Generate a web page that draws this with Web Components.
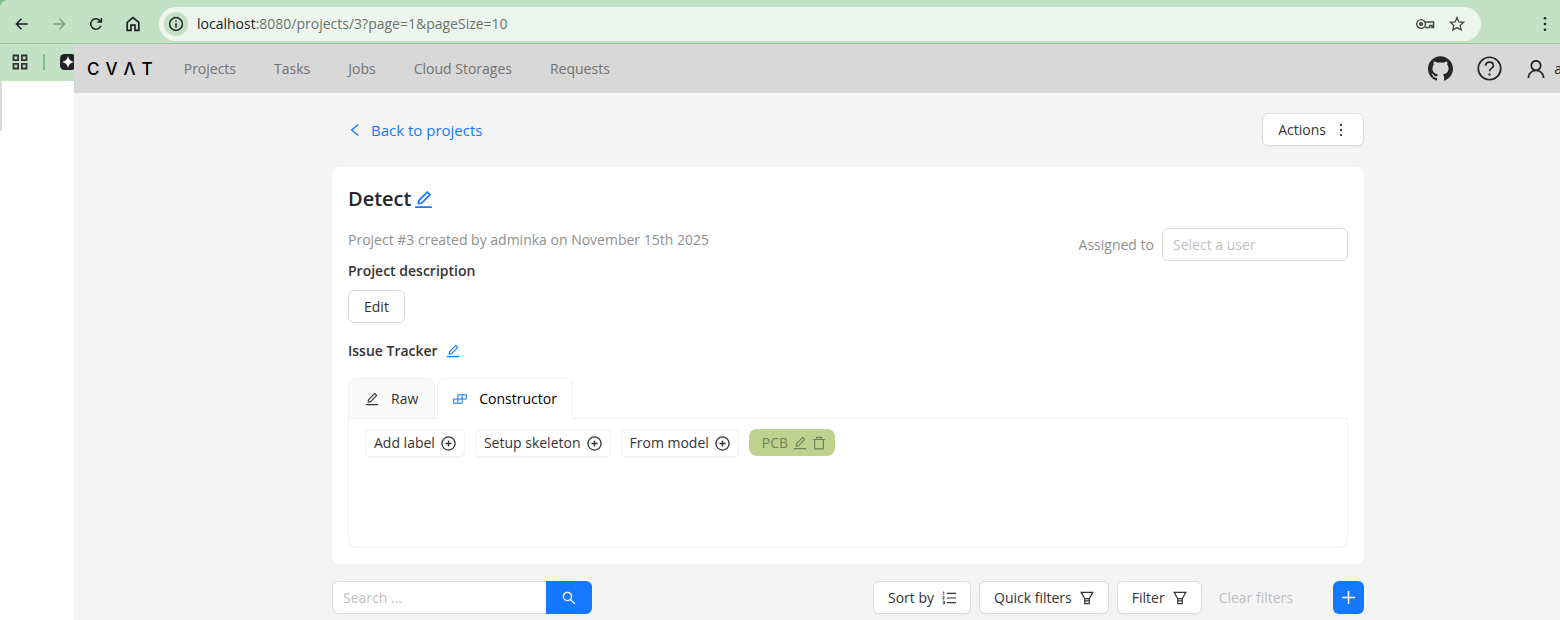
<!DOCTYPE html>
<html lang="en">
<head>
<meta charset="utf-8">
<title>Detect</title>
<style>
  html, body { height: 100%; }
  body {
    margin: 0;
    font: 14px/22px "Open Sans", "Noto Sans", sans-serif;
    color: #333;
    background: #fff;
    overflow: hidden;
  }
</style>
</head>
<body>
<browser-window url-host="localhost" url-path=":8080/projects/3?page=1&amp;pageSize=10">
  <cvat-header></cvat-header>
  <project-page></project-page>
</browser-window>

<script>
const ANT = {
  edit: 'M257.7 752c2 0 4-.2 6-.5L431.9 722c2-.4 3.9-1.3 5.3-2.8l423.9-423.9a9.96 9.96 0 000-14.1L694.9 114.9c-1.9-1.9-4.4-2.9-7.1-2.9s-5.2 1-7.1 2.9L256.8 538.8c-1.5 1.5-2.4 3.3-2.8 5.3l-29.5 168.2a33.5 33.5 0 009.4 29.8c6.6 6.4 14.9 9.9 23.8 9.9zm67.4-174.4L687.8 215l73.3 73.3-362.7 362.6-88.9 15.7 15.6-89zM880 836H144c-17.7 0-32 14.3-32 32v36c0 4.4 3.6 8 8 8h784c4.4 0 8-3.6 8-8v-36c0-17.7-14.3-32-32-32z',
  left: 'M724 218.3V141c0-6.7-7.7-10.4-12.9-6.3L260.3 486.8a31.86 31.86 0 000 50.3l450.8 352.1c5.3 4.1 12.9.4 12.9-6.3v-77.3c0-4.9-2.3-9.6-6.1-12.6l-360-281 360-281.1c3.8-3 6.1-7.7 6.1-12.6z',
  search: 'M909.6 854.5L649.9 594.8C690.2 542.7 712 479 712 412c0-80.2-31.3-155.4-87.9-212.1-56.6-56.7-132-87.9-212.1-87.9s-155.5 31.3-212.1 87.9C143.2 256.5 112 331.8 112 412c0 80.1 31.3 155.5 87.9 212.1C256.5 680.8 331.8 712 412 712c67 0 130.6-21.8 182.7-62l259.7 259.6a8.2 8.2 0 0011.6 0l43.6-43.5a8.2 8.2 0 000-11.6zM570.4 570.4C528 612.7 471.8 636 412 636s-116-23.3-158.4-65.6C211.3 528 188 471.8 188 412s23.3-116.1 65.6-158.4C296 211.3 352.2 188 412 188s116.1 23.2 158.4 65.6S636 352.2 636 412s-23.3 116.1-65.6 158.4z',
  build: 'M916 210H376c-17.7 0-32 14.3-32 32v236H108c-17.7 0-32 14.3-32 32v272c0 17.7 14.3 32 32 32h540c17.7 0 32-14.3 32-32V546h236c17.7 0 32-14.3 32-32V242c0-17.7-14.3-32-32-32zm-504 68h200v200H412V278zm-68 468H144V546h200v200zm268 0H412V546h200v200zm268-268H680V278h200v200z',
  github: 'M511.6 76.3C264.3 76.2 64 276.4 64 523.5 64 718.9 189.3 885 363.8 946c23.5 5.9 19.9-10.8 19.9-22.2v-77.5c-135.7 15.9-141.2-73.9-150.3-88.9C215 726 171.5 718 184.5 703c30.9-15.9 62.4 4 98.9 57.9 26.4 39.1 77.9 32.5 104 26 5.7-23.5 17.9-44.5 34.7-60.8-140.6-25.2-199.2-111-199.2-213 0-49.5 16.3-95 48.3-131.7-20.4-60.5 1.9-112.3 4.9-120 58.1-5.2 118.5 41.6 123.2 45.3 33-8.9 70.7-13.6 112.9-13.6 42.4 0 80.2 4.9 113.5 13.9 11.3-8.6 67.3-48.8 121.3-43.9 2.9 7.7 24.7 58.3 5.5 118 32.4 36.8 48.9 82.7 48.9 132.3 0 102.2-59 188.1-200 212.9a127.5 127.5 0 0138.1 91v112.5c.8 9 0 17.9 15 17.9 177.1-59.7 304.6-227 304.6-424.1 0-247.2-200.4-447.3-447.5-447.3z',
  user: 'M858.5 763.6a374 374 0 00-80.6-119.5 375.63 375.63 0 00-119.5-80.6c-.4-.2-.8-.3-1.2-.5C719.5 518 760 444.7 760 362c0-137-111-248-248-248S264 225 264 362c0 82.7 40.5 156 102.8 201.1-.4.2-.8.3-1.2.5-44.8 18.9-85 46-119.5 80.6a375.63 375.63 0 00-80.6 119.5A371.7 371.7 0 00136 901.8a8 8 0 008 8.2h60c4.4 0 7.9-3.5 8-7.8 2-77.2 33-149.5 87.8-204.3 56.7-56.7 132-87.9 212.2-87.9s155.5 31.2 212.2 87.9C779 752.7 810 825 812 902.2c.1 4.4 3.6 7.8 8 7.8h60a8 8 0 008-8.2c-1-47.8-10.9-94.3-29.5-138.2zM512 534c-45.9 0-89.1-17.9-121.6-50.4S340 407.9 340 362c0-45.9 17.9-89.1 50.4-121.6S466.1 190 512 190s89.1 17.9 121.6 50.4S684 316.1 684 362c0 45.9-17.9 89.1-50.4 121.6S557.9 534 512 534z'
};

// Line icons on a 16 unit grid
const LINE = {
  'plus-circle': '<circle cx="8" cy="8" r="7"/><path d="M8 4.8v6.4M4.8 8h6.4"/>',
  plus: '<path d="M8 1v14M1 8h14"/>',
  trash: '<path d="M1 4h14M5.2 4V1.6h5.6V4M3 4v10.6h10V4"/>',
  filter: '<path d="M1.4 1.6h13.2L10.6 8.8H5.4zM5.4 8.8v5.6h5.2V8.8M5.4 11.2h5.2"/>',
  list: '<path d="M5.5 2.8H16M5.5 8H16M5.5 13.2H16"/><path stroke-width="1" d="M1 1.2h1v3.2M.8 6.6h2L.8 9.2h2M.8 11.6h2v3.2h-2M1.4 13.2h1.4"/>',
  more: '<g fill="currentColor" stroke="none"><circle cx="8" cy="2.2" r="1.3"/><circle cx="8" cy="8" r="1.3"/><circle cx="8" cy="13.8" r="1.3"/></g>',
  question: '<circle cx="8" cy="8" r="7.2"/><path d="M5.5 6.3c0-1.5 1.1-2.4 2.5-2.4s2.5.9 2.5 2.3c0 1.8-2.5 1.7-2.5 3.6"/><circle cx="8" cy="11.8" r=".25"/>',
  back: '<path d="M14.5 8h-13M7.5 2L1.5 8l6 6"/>',
  forward: '<path d="M1.5 8h13M8.5 2l6 6-6 6"/>',
  reload: '<path d="M13.6 10A6 6 0 1 1 12.5 4L14 5.6M14.2 1.2v4.6H9.6"/>',
  home: '<path d="M2.2 14.4V6.3L8 1.6l5.8 4.7v8.1H10V9.2H6v5.2z"/>',
  info: '<circle cx="8" cy="8" r="6.4"/><path d="M8 7.2v4.2M8 4.4v1.4"/>',
  star: '<path d="M8 1.6l1.9 4.3 4.7.4-3.5 3.1 1 4.6L8 11.6 3.9 14l1-4.6L1.4 6.3l4.7-.4z"/>',
  key: '<circle cx="4.5" cy="8" r="3.9"/><circle cx="4.5" cy="8" r="1.2" fill="currentColor"/><path d="M8.2 6.3h7.4v4.9h-1.4V9.3h-2v1.9H8"/>',
  apps: '<path d="M1.5 1.5h4.6v4.6H1.5zM9.9 1.5h4.6v4.6H9.9zM1.5 9.9h4.6v4.6H1.5zM9.9 9.9h4.6v4.6H9.9z"/>',
  spark: '<g stroke="none"><rect width="16" height="16" rx="4.5" fill="#202124"/><path fill="#fff" d="M8 2q.8 5.2 6 6-5.2.8-6 6-.8-5.2-6-6 5.2-.8 6-6z"/></g>'
};

class AppIcon extends HTMLElement {
  constructor() {
    super();
    this.attachShadow({ mode: 'open' });
  }

  connectedCallback() {
    const name = this.getAttribute('name');
    const svg = ANT[name]
      ? `<svg viewBox="64 64 896 896" fill="currentColor"><path d="${ANT[name]}"/></svg>`
      : `<svg viewBox="0 0 16 16" fill="none" stroke="currentColor">${LINE[name]}</svg>`;
    this.shadowRoot.innerHTML = `
      <style>
        :host { display: inline-flex; flex: none; width: 1em; height: 1em; font-size: 14px; }
        svg { display: block; width: 100%; height: 100%; stroke-width: var(--stroke, 1.4); overflow: visible; }
      </style>
      ${svg}
    `;
  }
}
customElements.define('app-icon', AppIcon);

class AppButton extends HTMLElement {
  constructor() {
    super();
    this.attachShadow({ mode: 'open' });
    this.shadowRoot.innerHTML = `
      <style>
        :host { display: inline-flex; flex: none; }
        button {
          display: flex;
          align-items: center;
          gap: 8px;
          height: 33px;
          padding: 0 var(--button-padding, 15px);
          font: inherit;
          color: #333;
          background: #fff;
          border: 1px solid #dcdcdc;
          border-radius: 6px;
          box-shadow: 0 2px 0 rgba(0, 0, 0, 0.02);
          cursor: pointer;
        }
        :host([size="small"]) button {
          gap: 6px;
          height: 28px;
          padding: 0 8px;
          border-color: #f0f0f0;
          border-radius: 5px;
        }
        :host([type="text"]) button {
          padding: 0 8px;
          color: #bfbfbf;
          background: none;
          border-color: transparent;
          box-shadow: none;
        }
        :host([type="link"]) button {
          height: auto;
          padding: 0;
          color: #1677ff;
          background: none;
          border: 0;
          box-shadow: none;
        }
        :host([type="primary"]) button {
          padding: 0 8px;
          color: #fff;
          background: #1677ff;
          border: 0;
        }
        :host([type="search"]) button {
          padding: 0 16px;
          color: #fff;
          background: #1677ff;
          border: 0;
          border-radius: 0 6px 6px 0;
        }
      </style>
      <button type="button"><slot></slot></button>
    `;
  }

  connectedCallback() {
    const button = this.shadowRoot.querySelector('button');
    if (this.hasAttribute('label')) {
      button.setAttribute('aria-label', this.getAttribute('label'));
    }
    button.disabled = this.hasAttribute('disabled');
  }
}
customElements.define('app-button', AppButton);

class BrowserWindow extends HTMLElement {
  constructor() {
    super();
    this.attachShadow({ mode: 'open' });
  }

  connectedCallback() {
    this.shadowRoot.innerHTML = `
      <style>
        :host { display: flex; flex-direction: column; height: 100%; overflow: hidden; background: #7fbf86; }
        .toolbar {
          display: flex;
          align-items: center;
          flex: none;
          gap: 7px;
          padding: 7px 7px 2px 8px;
          background: #c3e1c4;
          border-bottom: 1px solid #9cc3a0;
          border-radius: 8px 0 0 0;
          color: #202124;
          --stroke: 1.7;
        }
        button {
          display: flex;
          align-items: center;
          justify-content: center;
          flex: none;
          padding: 0;
          color: inherit;
          background: none;
          border: 0;
        }
        .nav { display: flex; gap: 9px; }
        .nav button { width: 28px; height: 28px; }
        .nav button:disabled { color: #80a084; }
        .address {
          display: flex;
          align-items: center;
          flex: 1;
          gap: 9px;
          height: 34px;
          margin: 0 49px 0 5px;
          padding: 0 16px 0 5px;
          box-sizing: border-box;
          background: #edf6ee;
          border-radius: 17px;
        }
        .info { width: 24px; height: 24px; border-radius: 50%; background: #c3e1c4; --stroke: 1.5; }
        .url { flex: 1; color: #6b736c; }
        .url b { font-weight: 400; color: #202124; }
        .tools { display: flex; gap: 15px; color: #444b45; --stroke: 1.3; }
        .body { display: flex; flex: 1; min-height: 0; }
        .side { display: flex; flex-direction: column; flex: none; width: 74px; background: #fff; overflow: hidden; }
        .bookmarks {
          display: flex;
          align-items: center;
          gap: 15px;
          height: 37px;
          padding: 0 0 2px 12px;
          box-sizing: border-box;
          background: #c3e1c4;
          color: #333;
          --stroke: 1.8;
        }
        .bookmarks i { flex: none; width: 2px; height: 16px; background: #7cc389; }
        .edge { width: 2px; height: 50px; background: #dcdcdc; }
        /* the app is laid out a little wider than the space left for it */
        .app { display: flex; flex-direction: column; flex: 0 0 calc(100% - 12px); background: #f4f4f4; }
      </style>
      <div class="toolbar">
        <div class="nav">
          <button aria-label="Back"><app-icon name="back"></app-icon></button>
          <button aria-label="Forward" disabled><app-icon name="forward"></app-icon></button>
          <button aria-label="Reload"><app-icon name="reload"></app-icon></button>
          <button aria-label="Home"><app-icon name="home" style="font-size: 16px"></app-icon></button>
        </div>
        <div class="address">
          <button class="info" aria-label="Site information"><app-icon name="info" style="font-size: 16px"></app-icon></button>
          <span class="url"><b>${this.getAttribute('url-host')}</b>${this.getAttribute('url-path').replace('&', '&amp;')}</span>
          <span class="tools">
            <button aria-label="Passwords"><app-icon name="key" style="font-size: 18px"></app-icon></button>
            <button aria-label="Bookmark"><app-icon name="star" style="font-size: 16px"></app-icon></button>
          </span>
        </div>
        <button aria-label="Menu"><app-icon name="more" style="font-size: 16px"></app-icon></button>
      </div>
      <div class="body">
        <div class="side">
          <div class="bookmarks">
            <app-icon name="apps" style="font-size: 16px"></app-icon>
            <i></i>
            <app-icon name="spark" style="font-size: 16px"></app-icon>
          </div>
          <div class="edge"></div>
        </div>
        <div class="app"><slot></slot></div>
      </div>
    `;
  }
}
customElements.define('browser-window', BrowserWindow);

class CvatHeader extends HTMLElement {
  constructor() {
    super();
    this.attachShadow({ mode: 'open' });
    this.shadowRoot.innerHTML = `
      <style>
        :host { display: block; }
        header {
          display: flex;
          align-items: center;
          height: 49px;
          padding: 0 60px 0 13px;
          background: #d8d8d8;
        }
        .logo {
          display: flex;
          gap: 6px;
          margin-right: 31px;
          font: 500 17px/22px Inter, sans-serif;
          color: #000;
          text-decoration: none;
        }
        nav { display: flex; flex: 1; gap: 38px; }
        nav a { color: #737373; text-decoration: none; }
        .right { display: flex; align-items: center; gap: 24px; color: #262626; --stroke: 1.1; }
        button {
          display: flex;
          align-items: center;
          gap: 8px;
          padding: 0;
          font: inherit;
          color: inherit;
          background: none;
          border: 0;
        }
        .big { font-size: 25px; }
      </style>
      <header>
        <a class="logo" href="#" aria-label="CVAT"><span>C</span><span>V</span><span>Λ</span><span>T</span></a>
        <nav>
          <a href="#">Projects</a>
          <a href="#">Tasks</a>
          <a href="#">Jobs</a>
          <a href="#">Cloud Storages</a>
          <a href="#">Requests</a>
        </nav>
        <div class="right">
          <button aria-label="GitHub"><app-icon class="big" name="github"></app-icon></button>
          <button aria-label="Help"><app-icon class="big" name="question"></app-icon></button>
          <button><app-icon name="user" style="font-size: 20px"></app-icon>a</button>
        </div>
      </header>
    `;
  }
}
customElements.define('cvat-header', CvatHeader);

class LabelsEditor extends HTMLElement {
  constructor() {
    super();
    this.attachShadow({ mode: 'open' });
    this.shadowRoot.innerHTML = `
      <style>
        :host { display: block; }
        .tabs { display: flex; gap: 2px; }
        .tab {
          display: flex;
          align-items: center;
          gap: 12px;
          height: 41px;
          margin-bottom: -1px;
          padding: 0 16px;
          font: inherit;
          color: #333;
          background: #fafafa;
          border: 1px solid #f0f0f0;
          border-radius: 8px 8px 0 0;
        }
        .tab.active { position: relative; padding: 0 15px; color: #000; background: #fff; border-bottom-color: #fff; }
        .tab.active app-icon { color: #1677ff; }
        .pane {
          display: flex;
          align-items: flex-start;
          flex-wrap: wrap;
          gap: 10px;
          min-height: 130px;
          box-sizing: border-box;
          padding: 10px 16px;
          border: 1px solid #f0f0f0;
          border-radius: 0 0 8px 8px;
        }
        .label {
          display: flex;
          align-items: center;
          gap: 5px;
          height: 27px;
          padding: 0 9px 0 13px;
          color: #74815b;
          background: #bcd28d;
          border-radius: 8px;
        }
        .label button { display: flex; padding: 0; color: inherit; background: none; border: 0; }
      </style>
      <div class="tabs" role="tablist">
        <button class="tab" role="tab" aria-selected="false"><app-icon name="edit"></app-icon>Raw</button>
        <button class="tab active" role="tab" aria-selected="true"><app-icon name="build"></app-icon>Constructor</button>
      </div>
      <div class="pane" role="tabpanel">
        <app-button size="small">Add label<app-icon name="plus-circle" style="font-size: 15px"></app-icon></app-button>
        <app-button size="small">Setup skeleton<app-icon name="plus-circle" style="font-size: 15px"></app-icon></app-button>
        <app-button size="small">From model<app-icon name="plus-circle" style="font-size: 15px"></app-icon></app-button>
        <div class="label">
          <span>PCB</span>
          <button aria-label="Edit label"><app-icon name="edit"></app-icon></button>
          <button aria-label="Delete label"><app-icon name="trash"></app-icon></button>
        </div>
      </div>
    `;
  }
}
customElements.define('labels-editor', LabelsEditor);

class ProjectPage extends HTMLElement {
  constructor() {
    super();
    this.attachShadow({ mode: 'open' });
    this.shadowRoot.innerHTML = `
      <style>
        :host { display: grid; grid-template-columns: 1fr 4fr 1fr; padding: 20px 0 8px; }
        main { grid-column: 2; min-width: 0; }
        .top { display: flex; align-items: center; justify-content: space-between; }
        .back {
          display: flex;
          align-items: center;
          gap: 9px;
          margin-left: 16px;
          font-size: 15px;
          color: #1677ff;
          text-decoration: none;
        }
        .card { margin: 21px 0 17px; padding: 16px; background: #fff; border-radius: 8px; }
        h1 { display: flex; align-items: center; gap: 3px; margin: 0; font-size: 20px; line-height: 32px; font-weight: 600; color: #262626; }
        h2 { margin: 0; font-size: 14px; line-height: 22px; font-weight: 600; color: #333; }
        .info { display: flex; justify-content: space-between; align-items: flex-start; margin-top: 13px; }
        p { margin: 0; padding-top: 1px; line-height: 22px; color: #8f8f8f; }
        .description { display: flex; flex-direction: column; align-items: flex-start; gap: 8px; margin-top: 9px; }
        .assignee { display: flex; align-items: center; gap: 8px; color: #8f8f8f; }
        .tracker { display: flex; align-items: center; gap: 8px; margin: 17px 0 16px; }
        input {
          box-sizing: border-box;
          height: 33px;
          padding: 0 10px;
          font: inherit;
          color: #333;
          background: #fff;
          border: 1px solid #dcdcdc;
          border-radius: 6px;
          outline: 0;
        }
        input::placeholder { color: #bfbfbf; }
        .assignee input { width: 186px; }
        .bar { display: flex; align-items: center; justify-content: space-between; }
        .search { display: flex; }
        .search input { width: 214px; border-right: 0; border-radius: 6px 0 0 6px; }
        .filters { display: flex; gap: 8px; --button-padding: 14px; }
        .add { margin-left: 23px; --stroke: 1.6; }
      </style>
      <main>
        <div class="top">
          <a class="back" href="#"><app-icon name="left"></app-icon>Back to projects</a>
          <app-button>Actions<app-icon name="more"></app-icon></app-button>
        </div>
        <section class="card">
          <h1>Detect <app-button type="link" label="Rename project"><app-icon name="edit" style="font-size: 19px"></app-icon></app-button></h1>
          <div class="info">
            <div>
              <p>Project #3 created by adminka on November 15th 2025</p>
              <div class="description">
                <h2>Project description</h2>
                <app-button>Edit</app-button>
              </div>
            </div>
            <div class="assignee">
              <label for="assignee">Assigned to</label>
              <input id="assignee" type="text" placeholder="Select a user">
            </div>
          </div>
          <div class="tracker">
            <h2>Issue Tracker</h2>
            <app-button type="link" label="Edit issue tracker"><app-icon name="edit"></app-icon></app-button>
          </div>
          <labels-editor></labels-editor>
        </section>
        <div class="bar">
          <div class="search">
            <input type="search" placeholder="Search ..." aria-label="Search">
            <app-button type="search" label="Search"><app-icon name="search"></app-icon></app-button>
          </div>
          <div class="filters">
            <app-button>Sort by<app-icon name="list"></app-icon></app-button>
            <app-button>Quick filters<app-icon name="filter"></app-icon></app-button>
            <app-button>Filter<app-icon name="filter"></app-icon></app-button>
            <app-button type="text" disabled>Clear filters</app-button>
            <app-button class="add" type="primary" label="Create"><app-icon name="plus" style="font-size: 15px"></app-icon></app-button>
          </div>
        </div>
      </main>
    `;
  }
}
customElements.define('project-page', ProjectPage);
</script>
</body>
</html>
